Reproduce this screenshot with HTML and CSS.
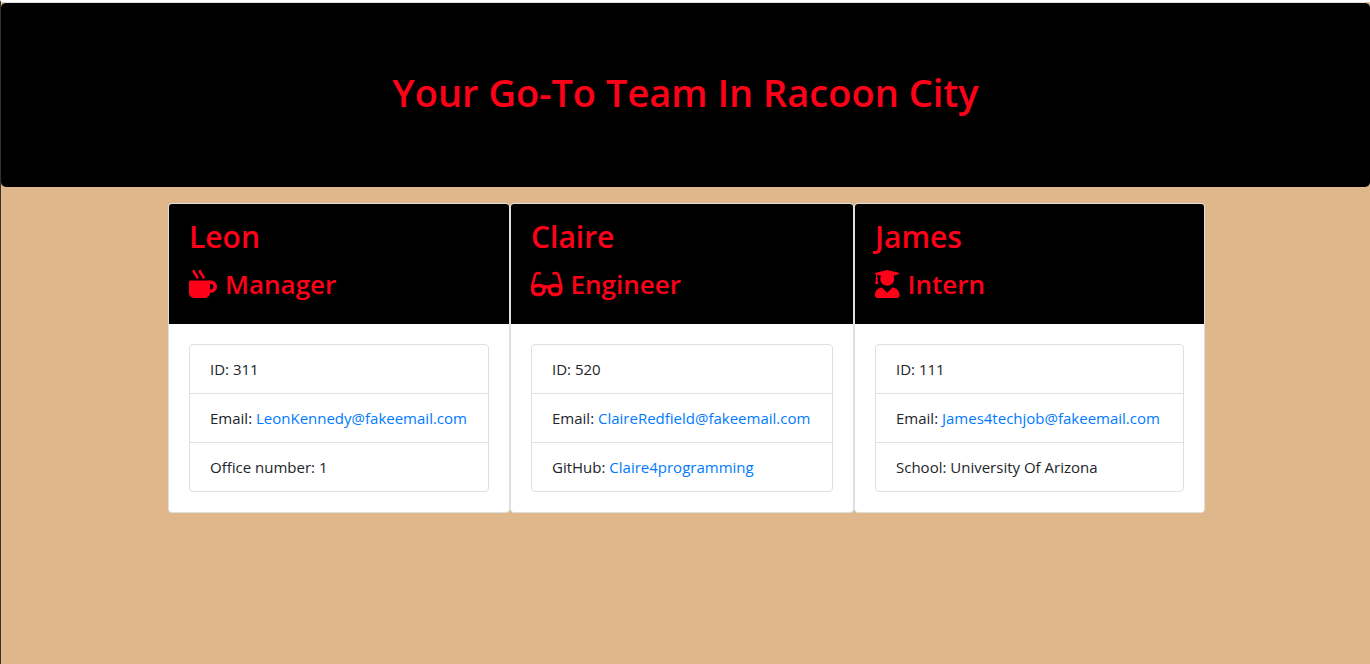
FILE: index.html
```html
<!DOCTYPE html>
<html lang="en">
<head>
<meta charset="utf-8">
<meta name="viewport" content="width=device-width, initial-scale=1">
<title>Your Go-To Team In Racoon City</title>
<link rel="stylesheet" href="styles.css">
</head>
<body>
<header class="banner">
  <h1 class="banner-title">Your Go-To Team In Racoon City</h1>
</header>
<main class="team">
  <section class="card">
    <div class="card-header">
      <h2 class="name">Leon</h2>
      <h3 class="role">
        <svg class="icon" viewBox="0 0 512 512" aria-hidden="true"><path d="M127.1 146.5c1.3 7.7 8 13.5 16 13.5h16.5c9.8 0 17.6-8.5 16.3-18-3.8-28.2-16.4-54.2-36.6-74.7-14.4-14.7-23.6-33.3-26.4-53.5C111.8 5.9 105 0 96.8 0H80.4C70.6 0 63 8.5 64.1 18c3.9 31.9 18 61.3 40.6 84.4 12 12.2 19.7 27.5 22.4 44.1zm112 0c1.3 7.7 8 13.5 16 13.5h16.5c9.8 0 17.6-8.5 16.3-18-3.8-28.2-16.4-54.2-36.6-74.7-14.4-14.7-23.6-33.3-26.4-53.5C223.8 5.9 217 0 208.8 0h-16.4c-9.8 0-17.5 8.5-16.3 18 3.9 31.9 18 61.3 40.6 84.4 12 12.2 19.7 27.5 22.4 44.1zM400 192H32c-17.7 0-32 14.3-32 32v192c0 53 43 96 96 96h192c53 0 96-43 96-96h16c61.8 0 112-50.2 112-112s-50.2-112-112-112zm0 160h-16v-96h16c26.5 0 48 21.5 48 48s-21.5 48-48 48z"/></svg>
        Manager
      </h3>
    </div>
    <div class="card-body">
      <ul class="details">
        <li class="detail">ID: 311</li>
        <li class="detail">Email: <a class="link" href="mailto:LeonKennedy@fakeemail.com">LeonKennedy@fakeemail.com</a></li>
        <li class="detail">Office number: 1</li>
      </ul>
    </div>
  </section>
  <section class="card">
    <div class="card-header">
      <h2 class="name">Claire</h2>
      <h3 class="role">
        <svg class="icon" viewBox="0 0 576 512" aria-hidden="true"><path d="M574.1 280.37L528.75 98.66c-5.91-23.7-21.59-44.05-43-55.81-21.44-11.73-46.97-14.11-70.19-6.33l-15.25 5.08c-8.39 2.79-12.92 11.86-10.12 20.24l5.06 15.18c2.79 8.38 11.85 12.91 20.23 10.12l13.18-4.39c10.87-3.62 23-3.57 33.16 1.73 10.29 5.37 17.57 14.56 20.37 25.82l38.46 153.82c-22.19-6.81-49.79-12.46-81.2-12.46-34.77 0-73.98 7.02-114.85 26.74h-73.18c-40.87-19.74-80.08-26.75-114.86-26.75-31.42 0-59.02 5.65-81.21 12.46l38.46-153.83c2.79-11.25 10.09-20.45 20.38-25.81 10.16-5.3 22.28-5.35 33.15-1.73l13.17 4.39c8.38 2.79 17.44-1.74 20.23-10.12l5.06-15.18c2.8-8.38-1.73-17.45-10.12-20.24l-15.25-5.08c-23.22-7.78-48.75-5.41-70.19 6.33-21.41 11.77-37.09 32.11-43 55.8L1.9 280.37A64.218 64.218 0 0 0 0 295.86v70.25C0 429.01 51.58 480 115.2 480h37.12c60.28 0 110.37-45.94 114.88-105.37l2.93-38.63h35.75l2.93 38.63C313.31 434.06 363.4 480 423.68 480h37.12c63.62 0 115.2-50.99 115.2-113.88v-70.25c0-5.23-.64-10.43-1.9-15.5zm-370.72 89.42c-1.97 25.91-24.4 46.21-51.06 46.21H115.2C86.97 416 64 393.62 64 366.11v-37.54c18.12-6.49 43.42-12.92 72.58-12.92 23.86 0 47.26 4.33 69.93 12.92l-3.13 41.22zM512 366.12c0 27.51-22.97 49.88-51.2 49.88h-37.12c-26.67 0-49.1-20.3-51.06-46.21l-3.13-41.22c22.67-8.59 46.08-12.92 69.95-12.92 29.12 0 54.43 6.44 72.55 12.93v37.54z"/></svg>
        Engineer
      </h3>
    </div>
    <div class="card-body">
      <ul class="details">
        <li class="detail">ID: 520</li>
        <li class="detail">Email: <a class="link" href="mailto:ClaireRedfield@fakeemail.com">ClaireRedfield@fakeemail.com</a></li>
        <li class="detail">GitHub: <a class="link" href="https://github.com/Claire4programming">Claire4programming</a></li>
      </ul>
    </div>
  </section>
  <section class="card">
    <div class="card-header">
      <h2 class="name">James</h2>
      <h3 class="role">
        <svg class="icon" viewBox="0 0 448 512" aria-hidden="true"><path d="M319.4 320.6L224 416l-95.4-95.4C57.1 323.7 0 382.2 0 454.4v9.6c0 26.5 21.5 48 48 48h352c26.5 0 48-21.5 48-48v-9.6c0-72.2-57.1-130.7-128.6-133.8zM13.6 79.8l6.4 1.5v58.4c-7 4.2-12 11.5-12 20.3 0 8.4 4.6 15.4 11.1 19.7L3.5 242c-1.7 6.9 2.1 14 7.6 14h41.8c5.5 0 9.3-7.1 7.6-14l-15.6-62.3C51.4 175.4 56 168.4 56 160c0-8.8-5-16.1-12-20.3V87.1l66 15.9c-8.6 17.2-14 36.4-14 57 0 70.7 57.3 128 128 128s128-57.3 128-128c0-20.6-5.3-39.8-14-57l96.3-23.2c18.2-4.4 18.2-27.1 0-31.5l-190.4-46c-13-3.1-26.7-3.1-39.7 0L13.6 48.2c-18.1 4.4-18.1 27.2 0 31.6z"/></svg>
        Intern
      </h3>
    </div>
    <div class="card-body">
      <ul class="details">
        <li class="detail">ID: 111</li>
        <li class="detail">Email: <a class="link" href="mailto:James4techjob@fakeemail.com">James4techjob@fakeemail.com</a></li>
        <li class="detail">School: University Of Arizona</li>
      </ul>
    </div>
  </section>
</main>
</body>
</html>
```

FILE: styles.css
```css
* {
  box-sizing: border-box;
}

html {
  background: #e0b78b;
}

body {
  min-height: 100vh;
  margin: 0;
  border-top: 2px solid #fff;
  border-left: 1px solid #33302e;
  color: #212529;
  font: 15px/24px "Segoe UI", "Open Sans", "Noto Sans", sans-serif;
}

h1,
h2,
h3,
ul {
  margin: 0;
  padding: 0;
}

.banner {
  padding: 65px 32px 71px;
  border-top: 1px solid #dfdfdf;
  border-radius: 5px;
  background: #000;
  color: #ff0019;
  text-align: center;
}

.banner-title {
  font-size: 38px;
  font-weight: 600;
  line-height: 48px;
}

.team {
  display: grid;
  grid-template-columns: 342fr 344fr 351fr;
  max-width: 1039px;
  margin: 0 auto;
  padding: 16px 0 16px 2px;
}

.card {
  overflow: hidden;
  border: 1px solid #dfdfdf;
  border-radius: 4px;
  background: #fff;
}

.card-header {
  padding: 13px 20px 20px;
  background: #000;
  color: #ff0019;
}

.name {
  margin-bottom: 7px;
  font-size: 30px;
  font-weight: 600;
  line-height: 40px;
}

.role {
  display: flex;
  align-items: center;
  gap: 8px;
  font-size: 26px;
  font-weight: 600;
  line-height: 40px;
}

.icon {
  height: 28px;
  fill: currentColor;
}

.card-body {
  padding: 20px;
}

.details {
  border: 1px solid #dfdfdf;
  border-radius: 4px;
  list-style: none;
}

.detail {
  padding: 12px 20px;
}

.detail + .detail {
  border-top: 1px solid #dfdfdf;
}

.link {
  color: #007bff;
  text-decoration: none;
}
```
